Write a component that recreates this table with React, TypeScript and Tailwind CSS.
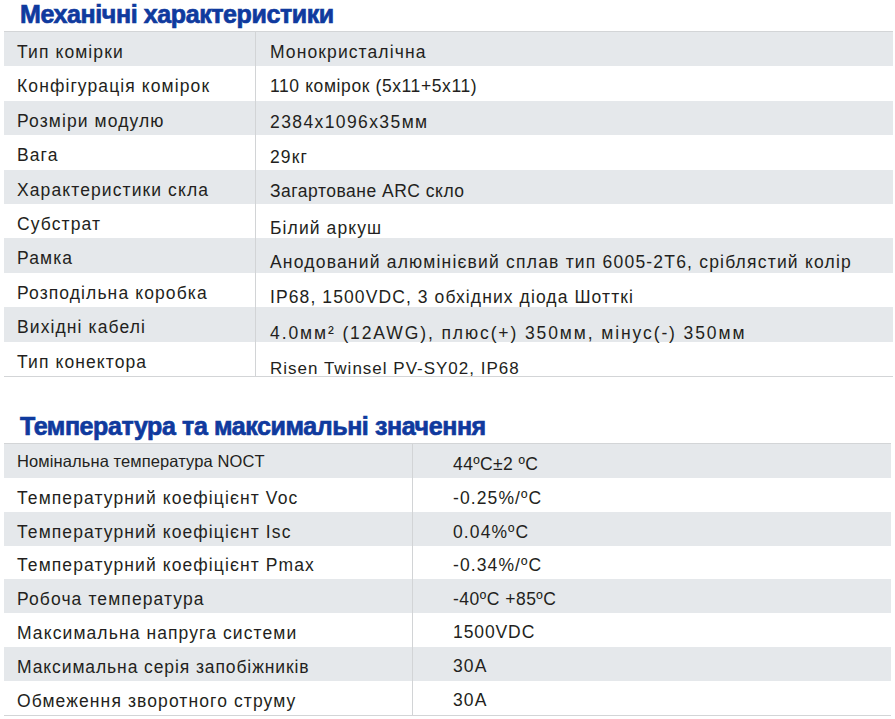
type Row = { label: string; value: string; lp?: string; vp?: string; labelClass?: string; valueClass?: string };

const mechanical: Row[] = [
  { label: "Тип комірки", value: "Монокристалічна" },
  { label: "Конфігурація комірок", value: "110 комірок (5x11+5x11)", valueClass: "tracking-[0.6px]" },
  { label: "Розміри модулю", value: "2384x1096x35мм", vp: "pt-[8px]", valueClass: "tracking-[1.4px]" },
  { label: "Вага", value: "29кг", vp: "pt-[10px]" },
  { label: "Характеристики скла", value: "Загартоване ARC скло", vp: "pt-[8px]", valueClass: "tracking-[0.5px]" },
  { label: "Субстрат", value: "Білий аркуш", vp: "pt-[14px]" },
  {
    label: "Рамка",
    value: "Анодований алюмінієвий сплав тип 6005-2T6, сріблястий колір",
    vp: "pt-[14px]",
    valueClass: "tracking-[1.2px]",
  },
  { label: "Розподільна коробка", value: "IP68, 1500VDC, 3 обхідних діода Шотткі", vp: "pt-[14px]" },
  {
    label: "Вихідні кабелі",
    value: "4.0мм² (12AWG), плюс(+) 350мм, мінус(-) 350мм",
    vp: "pt-[18px]",
    valueClass: "tracking-[1.9px]",
  },
  { label: "Тип конектора", value: "Risen Twinsel PV-SY02, IP68", vp: "pt-[20px]", valueClass: "text-[17px] tracking-[1px]" },
];

const temperature: Row[] = [
  {
    label: "Номінальна температура NOCT",
    value: "44ºC±2 ºC",
    lp: "pt-[2px]",
    vp: "pt-[6px]",
    labelClass: "text-[16.5px] tracking-[0.1px]",
    valueClass: "tracking-[0.4px]",
  },
  { label: "Температурний коефіцієнт Voc", value: "-0.25%/ºC" },
  { label: "Температурний коефіцієнт Isc", value: "0.04%ºC" },
  { label: "Температурний коефіцієнт Pmax", value: "-0.34%/ºC" },
  { label: "Робоча температура", value: "-40ºC +85ºC", valueClass: "tracking-[0.5px]" },
  { label: "Максимальна напруга системи", value: "1500VDC", vp: "pt-[4px]", valueClass: "pl-[2px] tracking-[0.9px]" },
  { label: "Максимальна серія запобіжників", value: "30A", vp: "pt-[4px]", labelClass: "tracking-[0.9px]" },
  { label: "Обмеження зворотного струму", value: "30A", vp: "pt-[4px]" },
];

function Heading({ children }: { children: string }) {
  return (
    <h2 className="ml-[20px] h-[31px] whitespace-nowrap font-['Liberation_Sans',Arial,sans-serif] text-[25px] font-bold leading-[28px] tracking-[-0.4px] text-[#0f3a9e] [-webkit-text-stroke:0.7px_#0f3a9e]">
      {children}
    </h2>
  );
}

function SpecTable({
  rows,
  labelWidth,
  rowHeight,
  valueIndent,
}: {
  rows: Row[];
  labelWidth: string;
  rowHeight: string;
  valueIndent: string;
}) {
  return (
    <div className="border-y border-[#d3d5d7]">
      {rows.map((row, i) => (
        <div key={row.label} className={`flex ${rowHeight} ${i % 2 === 0 ? "bg-[#e5e8eb]" : "bg-white"}`}>
          <div
            className={`flex ${labelWidth} shrink-0 items-center border-r border-[#d2d4d6] pl-[13px] ${row.lp ?? "pt-[6px]"} ${row.labelClass ?? ""}`}
          >
            {row.label}
          </div>
          <div className={`flex items-center whitespace-nowrap ${valueIndent} ${row.vp ?? "pt-[6px]"} ${row.valueClass ?? ""}`}>
            {row.value}
          </div>
        </div>
      ))}
    </div>
  );
}

export default function App() {
  return (
    <div className="h-[719px] w-[895px] overflow-hidden bg-white font-['Liberation_Sans',Arial,sans-serif] text-[17.5px] tracking-[1.1px] text-[#231f20]">
      <Heading>Механічні характеристики</Heading>
      <div className="ml-[4px] mr-[2px]">
        <SpecTable rows={mechanical} labelWidth="w-[252px]" rowHeight="h-[34.4px]" valueIndent="pl-[14px]" />
      </div>
      <div className="h-[35px]" />
      <Heading>Температура та максимальні значення</Heading>
      <div className="ml-[4px] mr-[4px]">
        <SpecTable rows={temperature} labelWidth="w-[409px]" rowHeight="h-[33.9px]" valueIndent="pl-[40px]" />
      </div>
    </div>
  );
}
